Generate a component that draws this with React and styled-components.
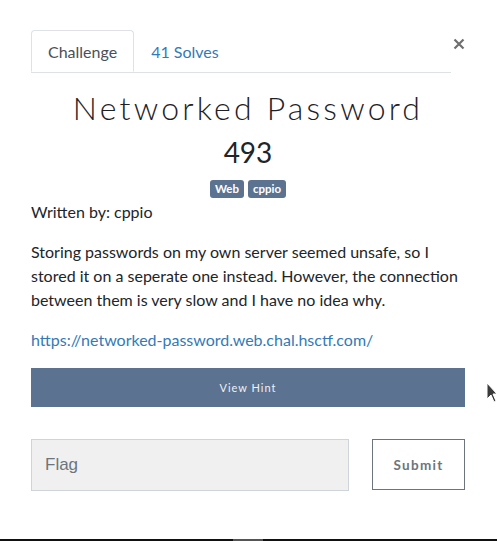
import React from "react";
import styled, { createGlobalStyle } from "styled-components";

const GlobalStyle = createGlobalStyle`
  html, body {
    margin: 0;
    padding: 0;
    background: #fff;
  }
  body {
    font-family: "Lato", "Noto Sans", sans-serif;
    color: #212529;
  }
  * { box-sizing: border-box; }
`;

const Page = styled.div`
  position: relative;
  height: 541px;
  overflow: hidden;
  background: #fff;
`;

const Modal = styled.div`
  padding: 31px 32px 0 31px;
`;

const Header = styled.div`
  display: flex;
  align-items: flex-start;
`;

const Tabs = styled.ul`
  list-style: none;
  margin: 0;
  padding: 0;
  display: flex;
  flex: 1;
  border-bottom: 1px solid #dee2e6;
`;

const Tab = styled.li`
  height: 42px;
  margin-bottom: -1px;
  padding: 0 16px;
  display: flex;
  align-items: center;
  font-size: 16px;
  color: ${(p) => (p.active ? "#495057" : "#337ab7")};
  background: #fff;
  border: 1px solid ${(p) => (p.active ? "#dee2e6" : "transparent")};
  border-bottom-color: ${(p) => (p.active ? "#fff" : "transparent")};
  border-radius: 4px 4px 0 0;
  position: relative;
  top: -1px;
`;

const Close = styled.button`
  width: 14px;
  margin-top: 7px;
  padding: 0;
  border: 0;
  background: none;
  display: flex;
  justify-content: flex-end;
`;

const Title = styled.h1`
  margin: 16px 0 0;
  text-align: center;
  font-weight: 300;
  font-size: 32px;
  line-height: 38px;
  letter-spacing: 3.2px;
  color: #1e2125;
`;

const Points = styled.h2`
  margin: 8px 0 0;
  text-align: center;
  font-weight: 400;
  font-size: 28px;
  line-height: 34px;
  color: #212529;
`;

const Tags = styled.div`
  display: flex;
  justify-content: center;
  gap: 4px;
  margin-top: 11px;
`;

const Tag = styled.span`
  background: #5b7290;
  color: #fff;
  font-size: 11.5px;
  font-weight: 700;
  line-height: 18px;
  padding: 0 5px;
  border-radius: 3px;
`;

const Text = styled.p`
  margin: ${(p) => p.mt || 0}px 0 0;
  font-size: 16px;
  line-height: 24px;
  color: #212529;
`;

const Link = styled.a`
  display: block;
  margin-top: 16px;
  font-size: 16px;
  line-height: 24px;
  color: #337ab7;
  text-decoration: none;
`;

const HintButton = styled.button`
  display: block;
  width: 100%;
  height: 39px;
  margin-top: 16px;
  border: 0;
  background: #5b7290;
  color: #eef1f5;
  font-family: "Lato", sans-serif;
  font-size: 11px;
  letter-spacing: 1px;
`;

const FlagRow = styled.div`
  display: flex;
  align-items: flex-start;
  justify-content: space-between;
  margin-top: 32px;
`;

const FlagInput = styled.input`
  width: 318px;
  height: 52px;
  padding: 0 13px;
  border: 1px solid #ced4da;
  background: #f0f0f0;
  font-family: "Liberation Sans", Arial, sans-serif;
  font-size: 17px;
  color: #495057;
  &::placeholder {
    color: #6c757d;
  }
`;

const SubmitButton = styled.button`
  width: 93px;
  height: 51px;
  border: 1px solid #6c757d;
  background: #fff;
  color: #6c757d;
  font-family: "Lato", sans-serif;
  font-weight: 700;
  font-size: 13.5px;
  letter-spacing: 1.3px;
`;

const Cursor = styled.svg`
  position: absolute;
  left: 486px;
  top: 382px;
`;

const BottomBar = styled.div`
  position: absolute;
  left: 0;
  right: 0;
  bottom: 0;
  height: 2px;
  background: #111;
`;

const BarThumb = styled.div`
  position: absolute;
  left: 233px;
  width: 30px;
  height: 2px;
  background: #555;
`;

export default function App() {
  return (
    <Page>
      <GlobalStyle />
      <Modal>
        <Header>
          <Tabs>
            <Tab active>Challenge</Tab>
            <Tab>41 Solves</Tab>
          </Tabs>
          <Close aria-label="Close">
            <svg width="12" height="12" viewBox="0 0 12 12">
              <path d="M1.5 1.5 L10.5 10.5 M10.5 1.5 L1.5 10.5" stroke="#6f6f6f" strokeWidth="2.2" />
            </svg>
          </Close>
        </Header>
        <Title>Networked Password</Title>
        <Points>493</Points>
        <Tags>
          <Tag>Web</Tag>
          <Tag>cppio</Tag>
        </Tags>
        <Text mt={2}>Written by: cppio</Text>
        <Text mt={16}>
          Storing passwords on my own server seemed unsafe, so I stored it on a seperate one
          instead. However, the connection between them is very slow and I have no idea why.
        </Text>
        <Link href="#">https://networked-password.web.chal.hsctf.com/</Link>
        <HintButton>View Hint</HintButton>
        <FlagRow>
          <FlagInput placeholder="Flag" />
          <SubmitButton>Submit</SubmitButton>
        </FlagRow>
      </Modal>
      <Cursor width="11" height="22" viewBox="0 0 11 22">
        <path d="M1 1 L1 17 L5 13 L8 20 L10 19 L7 12 L11 12 Z" fill="#3a3a3a" stroke="#fff" strokeWidth="1" />
      </Cursor>
      <BottomBar>
        <BarThumb />
      </BottomBar>
    </Page>
  );
}
